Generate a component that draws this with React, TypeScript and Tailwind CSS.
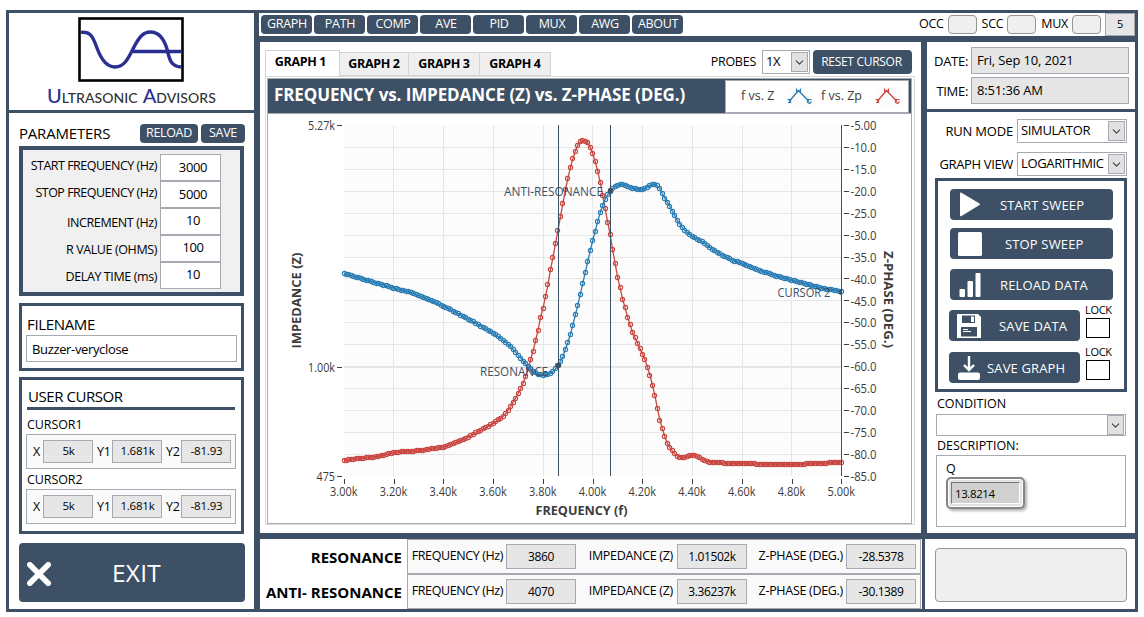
import React from 'react';
import { ChevronDown } from 'lucide-react';
import clsx from 'clsx';

type Point = [number, number];

const START_HZ = 3000;
const STOP_HZ = 5000;
const STEP_HZ = 10;

// Both traces as plotted on the canvas
const impedance: Point[] = [
  [344, 273.3], [394, 288.3], [410, 292.3], [426.7, 299], [443.3, 306], [460, 314.7], [476.7, 323.7],
  [493.3, 333.3], [503, 340], [510, 346], [516.7, 353.5], [521, 358.5], [525, 363.3], [529.4, 367.7],
  [533.6, 371.7], [537.8, 374.3], [544, 375.5], [550.4, 373.3], [554.6, 370], [558.4, 365.3],
  [563.3, 356], [565.7, 348.3], [568.3, 341.3], [570.7, 333.3], [573.3, 323.3], [575.7, 313.3],
  [578.3, 303.3], [580.7, 292.3], [583.3, 281.3], [585.7, 270.3], [588.3, 259.3], [590.7, 248.3],
  [593.3, 238.3], [595.7, 229.3], [598, 220.3], [600.3, 212.3], [602.7, 205.3], [605.3, 199],
  [607.7, 194.7], [610.7, 190.3], [615.3, 186.3], [622.3, 184], [630, 187.3], [638.3, 189.7],
  [645, 188.7], [650, 185.3], [655, 184], [659.3, 187.3], [663.3, 195.7], [667.3, 202.3],
  [671.7, 210], [678.3, 222.3], [685, 230.7], [692.3, 236.7], [703.3, 242.3], [711.7, 249],
  [723.3, 255.7], [733.3, 260.7], [742.3, 263.7], [760, 270.7], [776.7, 276], [791.7, 280.3],
  [803.3, 283.3], [820, 287.7], [841.7, 292],
];

const phase: Point[] = [
  [344, 460.3], [361, 458.3], [377.8, 456.7], [394.7, 452.3], [420, 450.7], [443.5, 447], [462, 440.3],
  [470.4, 436], [483, 429], [493.6, 423.3], [504, 415.7], [508.3, 410], [514.6, 400], [518.8, 392.3],
  [521, 387.7], [523.5, 382.3], [526, 375], [528.5, 367.7], [530.7, 359.3], [533.3, 350.3],
  [535.7, 340.3], [538.3, 329.3], [540.3, 318.3], [543.3, 307.3], [545.7, 295.3], [548.3, 283.3],
  [550.3, 270.3], [553.3, 256], [555.7, 242.3], [558.3, 228.3], [560.7, 215.3], [563.3, 201.3],
  [565.7, 188.3], [568.3, 176.3], [570.7, 166.3], [573.3, 157.3], [575.7, 150], [578.3, 144],
  [580.7, 141.3], [583.3, 140.3], [588.3, 143], [590.7, 148.3], [593.3, 155.3], [595.7, 163.3],
  [598, 172.3], [600.3, 183], [602.7, 195.3], [605.3, 209.3], [607.7, 222.3], [610.3, 235.3],
  [612.7, 250.3], [615.3, 264.3], [617.3, 276.3], [620.3, 288.3], [622.3, 298.3], [625.3, 308.3],
  [627.3, 316.3], [630.3, 325.3], [632.3, 332.3], [635.3, 338.3], [640.3, 349.3], [645.3, 360.3],
  [650.3, 376.3], [652.7, 386.3], [655.6, 398.3], [657.7, 410.3], [660.3, 421.7], [662.8, 430.3],
  [665.3, 438.3], [667.8, 444.3], [670.8, 449], [674.6, 453.7], [678.8, 457.3], [685, 457.7],
  [691.4, 455], [696.4, 456], [702, 459.3], [709.5, 462], [723, 463], [765, 464.3], [798.7, 464.3],
  [841.7, 462.3],
];

const toX = (hz: number) => 344 + ((hz - START_HZ) / (STOP_HZ - START_HZ)) * 497.5;

const sample = (trace: Point[]): Point[] => {
  const out: Point[] = [];
  for (let hz = START_HZ; hz <= STOP_HZ; hz += STEP_HZ) {
    const x = toX(hz);
    let i = 1;
    while (i < trace.length - 1 && trace[i][0] < x) i++;
    const [x0, y0] = trace[i - 1];
    const [x1, y1] = trace[i];
    out.push([x, y0 + ((x - x0) / (x1 - x0)) * (y1 - y0)]);
  }
  return out;
};

// Markers snap to whole pixels, the line between them does not
const Trace = ({ trace, color }: { trace: Point[]; color: string }) => {
  const points = sample(trace);
  return (
    <g fill="none" stroke={color}>
      <polyline points={points.map((p) => p.join(',')).join(' ')} strokeWidth="1.3" />
      {points.map(([x, y]) => (
        <circle key={x} cx={Math.floor(x) + 0.5} cy={Math.floor(y) + 0.5} r="2.1" strokeWidth="1.15" />
      ))}
    </g>
  );
};

const phaseTicks = Array.from({ length: 17 }, (_, i) => -5 - i * 5);
const freqTicks = Array.from({ length: 11 }, (_, i) => 3000 + i * 200);

const Chart = () => (
  <svg width="643" height="409" viewBox="268 114 643 409" className="block" fontSize="12" fill="#3c3c3c">
    <rect x="344" y="125" width="497" height="351" fill="#fcfcfc" />
    <g stroke="#e6e6e6" strokeWidth="1" shapeRendering="crispEdges">
      {freqTicks.slice(1, -1).map((hz) => (
        <line key={hz} x1={toX(hz)} x2={toX(hz)} y1="125" y2="476" />
      ))}
      {phaseTicks.slice(1, -1).map((deg, i) => (
        <line key={deg} x1="344" x2="841" y1={147.4 + i * 21.93} y2={147.4 + i * 21.93} />
      ))}
      <line x1="344" x2="841" y1="367.5" y2="367.5" />
    </g>

    <g stroke="#3c3c3c" shapeRendering="crispEdges">
      <line x1="337" x2="342" y1="125.5" y2="125.5" />
      <line x1="337" x2="342" y1="367.5" y2="367.5" />
      <line x1="337" x2="342" y1="476.5" y2="476.5" />
      {phaseTicks.map((deg, i) => (
        <line key={deg} x1="844" x2="849" y1={125.4 + i * 21.94} y2={125.4 + i * 21.94} />
      ))}
      {freqTicks.map((hz) => (
        <line key={hz} x1={toX(hz) + 0.4} x2={toX(hz) + 0.4} y1="479" y2="484" />
      ))}
    </g>

    <text x="308" y="130" textLength="27" lengthAdjust="spacingAndGlyphs">5.27k</text>
    <text x="308" y="372" textLength="27" lengthAdjust="spacingAndGlyphs">1.00k</text>
    <text x="316.5" y="481" textLength="18.5" lengthAdjust="spacingAndGlyphs">475</text>
    {phaseTicks.map((deg, i) => (
      <text key={deg} x="850.5" y={130 + i * 21.94} textLength="26" lengthAdjust="spacingAndGlyphs">
        {deg === -5 ? '-5.00' : deg.toFixed(1)}
      </text>
    ))}
    {freqTicks.map((hz) => (
      <text key={hz} x={toX(hz) - 14} y="496" textLength="27.5" lengthAdjust="spacingAndGlyphs">
        {(hz / 1000).toFixed(2)}k
      </text>
    ))}

    <g fontWeight="700" fontSize="12.5">
      <text x="535.5" y="515" textLength="92" lengthAdjust="spacingAndGlyphs">FREQUENCY (f)</text>
      <text transform="translate(301 348.5) rotate(-90)" textLength="96" lengthAdjust="spacingAndGlyphs">IMPEDANCE (Z)</text>
      <text transform="translate(884 251) rotate(90)" textLength="97" lengthAdjust="spacingAndGlyphs">Z-PHASE (DEG.)</text>
    </g>

    <Trace trace={phase} color="#c94843" />
    <Trace trace={impedance} color="#2b7db3" />

    <g stroke="#3d5065" shapeRendering="crispEdges">
      <line x1="558.5" x2="558.5" y1="125" y2="476" />
      <line x1="610.5" x2="610.5" y1="125" y2="476" />
      <line x1="841.5" x2="841.5" y1="125" y2="476" />
    </g>
    <g fill="#3d5065">
      <circle cx="558.5" cy="365.5" r="2.7" />
      <circle cx="610.5" cy="190.5" r="2.7" />
      <path d="M841.5 289.6a2.7 2.7 0 0 0 0 5.4z" />
      <text x="504" y="196" textLength="99" lengthAdjust="spacingAndGlyphs">ANTI-RESONANCE</text>
      <text x="480" y="376" textLength="68" lengthAdjust="spacingAndGlyphs">RESONANCE</text>
      <text x="777.5" y="297" textLength="53" lengthAdjust="spacingAndGlyphs">CURSOR 2</text>
    </g>
  </svg>
);

const LegendMark = ({ color }: { color: string }) => (
  <svg width="27" height="19" viewBox="0 0 27 19" className="shrink-0 bg-[#fcfcfc]" fill="none" stroke={color}>
    <path d="M2 14.500 11.500 3.500 22 14.500" strokeWidth="1.4" />
    <path d="M.5 12.500H3.500V15.500H1M9.500 1.500V4.500H13.500V1.500M10.500 3.500H12.500M20.500 12.500H24.500M20.500 12.500V15.500L22.500 16.500L24.500 14.500" strokeWidth="1.2" />
  </svg>
);

const Logo = () => (
  <svg width="106" height="65" viewBox="0 0 106 65" className="ml-[69px] block" fill="none">
    <rect x="1.5" y="1.5" width="103" height="62" stroke="#000" strokeWidth="2.6" />
    <g stroke="#2b2f92" strokeWidth="3.4">
      <path d="M3 15.400C12 14.400 14.500 18.500 19 31C23 42 29 50 37 50C46 50 50 42 55 32C61 20 65 15 72.500 15C81 15 86 22 89 32C91.500 43 93 49.500 103 50" />
      <path d="M55 34.500H103" />
    </g>
  </svg>
);

const Panel = ({ className, children }: { className?: string; children?: React.ReactNode }) => (
  <div className={clsx('bg-white', className)}>{children}</div>
);

const Field = ({ className, children }: { className?: string; children?: React.ReactNode }) => (
  <div className={clsx('flex shrink-0 items-center border border-[#a9a9b1] whitespace-nowrap', className)}>{children}</div>
);

const NavButton = ({ className, children }: { className?: string; children: React.ReactNode }) => (
  <button className={clsx('flex shrink-0 items-center justify-center rounded bg-[#3d5065] font-medium whitespace-nowrap text-white', className)}>
    {children}
  </button>
);

const Select = ({ className, value }: { className?: string; value?: string }) => (
  <Field className={clsx('justify-between bg-white pr-px pl-[3px]', className)}>
    <span>{value}</span>
    <span className="flex h-5 w-[17px] items-center justify-center border border-[#a9a9b1] bg-[#e1e1e1]">
      <ChevronDown size={13} strokeWidth={2} className="shrink-0 text-[#404040]" />
    </span>
  </Field>
);

const parameters = [
  { label: 'START FREQUENCY (Hz)', value: '3000' },
  { label: 'STOP FREQUENCY (Hz)', value: '5000' },
  { label: 'INCREMENT (Hz)', value: '10' },
  { label: 'R VALUE (OHMS)', value: '100' },
  { label: 'DELAY TIME (ms)', value: '10' },
];

const CursorRow = () => (
  <Field className="h-[35px] w-[210px] bg-[#fafafa] pl-1.5 text-[12.5px]">
    {[['X', '5k'], ['Y1', '1.681k'], ['Y2', '-81.93']].map(([name, value], i) => (
      <React.Fragment key={name}>
        <span className={clsx('pt-0.5 tracking-[-0.3px]', i === 0 ? 'w-2.5' : 'w-[19px] pl-1')}>{name}</span>
        <Field className="h-[23px] w-[50px] justify-center bg-[#e6e6e6] pb-px pl-px text-[11.5px] tracking-[-0.2px]">{value}</Field>
      </React.Fragment>
    ))}
  </Field>
);

const Sidebar = () => (
  <div className="flex w-[245px] flex-col gap-[3px]">
    <Panel className="h-[97px] pt-1">
      <Logo />
      <div className="mt-[3px] ml-[38px] flex items-baseline font-[Lato] text-[14px] leading-5 font-medium whitespace-nowrap text-[#333]">
        <span className="text-[20px] text-[#2b2f92]">U</span>
        <span className="tracking-[0.05px]">LTRASONIC</span>
        <span className="ml-[5px] text-[20px] text-[#2b2f92]">A</span>
        <span className="tracking-[0.05px]">DVISORS</span>
      </div>
    </Panel>

    <Panel className="h-[496px] pl-2.5">
      <div className="flex h-[33px] items-end pb-[3px]">
        <span className="w-[121px] pb-px text-[15px] leading-[18px] tracking-[-0.2px]">PARAMETERS</span>
        <NavButton className="h-[19px] w-[58px] text-[12.5px] tracking-[-0.35px]">RELOAD</NavButton>
        <NavButton className="ml-[3px] h-[19px] w-11 text-[12.5px] tracking-[-0.3px]">SAVE</NavButton>
      </div>

      <div className="h-[150px] w-[225px] border-4 border-[#3d5065] bg-[#f0f0f0] pt-1">
        {parameters.map(({ label, value }, i) => (
          <div key={label} className="flex h-[27px] text-[12.5px]">
            <span
              className={clsx(
                'flex w-[134px] items-center justify-end whitespace-nowrap',
                i < 2 ? 'pb-0.5 tracking-[-0.5px]' : 'pt-1 tracking-[-0.4px]',
              )}
            >
              {label}
            </span>
            <Field className={clsx('ml-[3px] w-[61px] justify-center bg-white pl-[5px] text-[13px] tracking-[-0.35px]', i >= 2 && 'pb-0.5')}>
              {value}
            </Field>
          </div>
        ))}
      </div>

      <div className="mt-[7px] h-[68px] w-[225px] border-[3px] border-[#3d5065] pl-1">
        <div className="mt-[7px] pl-px text-[15px] leading-[22px] tracking-[-0.35px]">FILENAME</div>
        <Field className="h-[27px] w-[211px] bg-white pt-0.5 pl-[5px] text-[13px] tracking-[-0.35px]">Buzzer-veryclose</Field>
      </div>

      <div className="mt-1.5 h-[157px] w-[225px] border-[3px] border-[#3d5065] pl-1">
        <div className="mt-[5px] pl-0.5 text-[15px] leading-[22px] tracking-[-0.45px]">USER CURSOR</div>
        <div className="ml-px h-[3px] w-[208px] bg-[#3d5065]" />
        <div className="h-6 pt-1.5 pl-px text-[12.5px] leading-[18px] tracking-[-0.1px]">CURSOR1</div>
        <CursorRow />
        <div className="h-5 pt-0.5 pl-px text-[12.5px] leading-[18px] tracking-[-0.1px]">CURSOR2</div>
        <CursorRow />
      </div>

      <button className="mt-[9px] flex h-[59px] w-[226px] items-center rounded bg-[#3d5065] pt-0.5 pl-2 text-[24.5px] text-white">
        <svg width="24" height="24" viewBox="0 0 24 24" stroke="#fff" strokeWidth="5.600" strokeLinecap="round">
          <path d="M2.800 2.800 21.200 21.200M21.200 2.800 2.800 21.200" />
        </svg>
        <span className="ml-[61px] tracking-[0.2px]">EXIT</span>
      </button>
    </Panel>
  </div>
);

const navItems = ['GRAPH', 'PATH', 'COMP', 'AVE', 'PID', 'MUX', 'AWG', 'ABOUT'];

const TopBar = () => (
  <Panel className="flex h-[23px] items-center pl-0.5 text-[12.5px]">
    <div className="flex gap-0.5">
      {navItems.map((item) => (
        <NavButton key={item} className="h-[19px] w-[51px] pl-px text-[12.5px] tracking-[-0.3px]">{item}</NavButton>
      ))}
    </div>
    <div className="ml-auto flex items-center tracking-[-0.3px]">
      {['OCC', 'SCC', 'MUX'].map((name) => (
        <React.Fragment key={name}>
          <span className="mr-1">{name}</span>
          <span className="mr-[5px] h-[19px] w-[29px] rounded border border-[#959595] bg-[#efefef]" />
        </React.Fragment>
      ))}
      <Field className="-ml-px h-[23px] w-[30px] justify-center bg-[#e6e6e6] text-[11px]">5</Field>
    </div>
  </Panel>
);

const GraphPanel = () => (
  <Panel className="h-[491px] w-[661px] pt-2 pl-[5px]">
    <div className="flex h-[26px] text-[12.5px] font-bold tracking-[-0.35px]">
      <div className="flex w-[75px] items-center justify-center border border-b-0 border-[#d4d4d4] pr-1 pb-[3px]">GRAPH 1</div>
      {[['GRAPH 2', 'w-[69px]'], ['GRAPH 3', 'w-[71px]'], ['GRAPH 4', 'w-[71px]']].map(([tab, width]) => (
        <div key={tab} className={clsx('mt-0.5 flex items-center justify-center border border-l-0 border-[#d4d4d4] bg-[#efefef]', width)}>
          {tab}
        </div>
      ))}
      <div className="ml-auto flex h-6 items-center pr-[9px] font-normal">
        <span className="mr-1.5 tracking-[-0.25px]">PROBES</span>
        <Select value="1X" className="h-6 w-12 pl-1.5 text-[13px]" />
        <NavButton className="ml-[3px] h-6 w-[99px] pr-0.5 text-[12px] tracking-[-0.3px]">RESET CURSOR</NavButton>
      </div>
    </div>

    <div className="h-[449px] w-[650px] border border-[#d9d9d9] p-px">
      <div className="h-[446px] w-[645px] border border-[#a9a9b1]">
        <div className="flex h-[35px] items-center justify-between border-b border-[#a9a9b1] bg-[#3d5065] pr-0.5 pl-1.5">
          <span className="pb-0.5 text-[17px] font-bold tracking-[-0.1px] whitespace-nowrap text-white">
            FREQUENCY vs. IMPEDANCE (Z) vs. Z-PHASE (DEG.)
          </span>
          <Field className="h-[33px] w-[184px] bg-white pl-[15px] text-[12.5px] text-[#3c3c3c]">
            <span className="w-[46px]">f vs. Z</span>
            <LegendMark color="#2b7db3" />
            <span className="mx-[7px] w-[47px]">f vs. Zp</span>
            <LegendMark color="#c94843" />
          </Field>
        </div>
        <Chart />
      </div>
    </div>
  </Panel>
);

const PlayIcon = () => (
  <svg width="24" height="25" viewBox="0 0 24 25" fill="#fff"><path d="M2 1.500Q2 0 3.500.8L21.500 11.500Q22.500 12.300 21.500 13L3.500 24Q2 24.800 2 23.500Z" /></svg>
);
const StopIcon = () => (
  <svg width="24" height="24" viewBox="0 0 24 24"><rect width="24" height="24" rx="1.500" fill="#fff" /></svg>
);
const BarsIcon = () => (
  <svg width="24" height="24" viewBox="0 0 24 24" fill="#fff">
    <rect x="1.500" y="16" width="5.500" height="8" rx="1" />
    <rect x="9.500" y="8" width="5.500" height="16" rx="1" />
    <rect x="17.500" y="0" width="5" height="24" rx="1" />
  </svg>
);
const FloppyIcon = () => (
  <svg width="24" height="24" viewBox="0 0 24 24">
    <path d="M0 0H21L24 3V24H0Z" fill="#fff" />
    <path d="M5 1.500H18V9H5ZM4 13H20V22.500H4Z" fill="#3d5065" />
    <rect x="14" y="2.500" width="3" height="5.500" fill="#fff" />
    <path d="M6 15.500H11M6 17.500H14" stroke="#fff" strokeWidth="1" />
  </svg>
);
const DownloadIcon = () => (
  <svg width="24" height="24" viewBox="0 0 24 24">
    <path d="M12 0V13M7 9 12 14 17 9" fill="none" stroke="#fff" strokeWidth="2.400" />
    <rect x="1" y="16.500" width="22" height="7.500" rx="2" fill="#fff" />
  </svg>
);

const ActionButton = ({ icon, label, className, text }: { icon: React.ReactNode; label: string; className: string; text: string }) => (
  <button className={clsx('flex h-[31px] items-center rounded bg-[#3d5065] pl-2 text-[13px] font-medium whitespace-nowrap text-white', className)}>
    {icon}
    <span className={clsx('pt-0.5 tracking-[0.15px]', text)}>{label}</span>
  </button>
);

const Lock = ({ className }: { className: string }) => (
  <div className={clsx('w-7 text-[11px] leading-3', className)}>
    <div className="-ml-px pt-px tracking-[-0.3px]">LOCK</div>
    <div className="mt-0.5 h-5 w-6 border border-black bg-white" />
  </div>
);

const ControlPanel = () => (
  <div className="ml-1.5 flex w-[208px] flex-col gap-[3px] text-[13px]">
    <Panel className="flex h-[67px] flex-col gap-[3px] pt-[5px]">
      {[['DATE:', 'Fri, Sep 10, 2021'], ['TIME:', '8:51:36 AM']].map(([name, value]) => (
        <div key={name} className="flex h-[27px] items-center">
          <span className="w-[41px] pt-[3px] text-right tracking-[-0.3px]">{name}</span>
          <Field className="ml-[3px] h-[27px] w-[158px] bg-[#e6e6e6] pt-px pl-[5px] tracking-[-0.15px]">{value}</Field>
        </div>
      ))}
    </Panel>

    <Panel className="h-[421px] pt-[7px] pl-2">
      {[['RUN MODE', 'SIMULATOR', 'tracking-[-0.2px]'], ['GRAPH VIEW', 'LOGARITHMIC', 'mt-[9px] tracking-[-0.35px]']].map(([name, value, cls]) => (
        <div key={name} className={clsx('flex h-6 items-center', cls)}>
          <span className="w-[78px] pt-0.5 text-right whitespace-nowrap">{name}</span>
          <Select value={value} className="ml-1 h-6 w-[110px] tracking-[-0.35px]" />
        </div>
      ))}

      <div className="mt-0.5 h-[214px] w-[192px] border-[3px] border-[#3d5065] pt-2 pl-3">
        <ActionButton icon={<PlayIcon />} label="START SWEEP" className="w-[163px]" text="ml-[18px]" />
        <ActionButton icon={<StopIcon />} label="STOP SWEEP" className="mt-2 w-[163px]" text="ml-[23px]" />
        <ActionButton icon={<BarsIcon />} label="RELOAD DATA" className="mt-2.5 w-[163px]" text="ml-[18px]" />
        <div className="-ml-px flex">
          <ActionButton icon={<FloppyIcon />} label="SAVE DATA" className="mt-2.5 w-[131px]" text="ml-[18px]" />
          <Lock className="mt-[3px] ml-1.5" />
        </div>
        <div className="-ml-px flex">
          <ActionButton icon={<DownloadIcon />} label="SAVE GRAPH" className="mt-[11px] w-[131px]" text="ml-[6px]" />
          <Lock className="mt-1 ml-1.5" />
        </div>
      </div>

      <div className="h-[22px] pl-0.5 text-[12.5px] leading-[24px]">CONDITION</div>
      <Select className="ml-px h-[22px] w-[190px]" />
      <div className="h-[19px] pl-0.5 text-[12.5px] leading-[20px] tracking-[-0.05px]">DESCRIPTION:</div>
      <div className="ml-px h-[72px] w-[190px] border border-[#a9a9b1] pt-1 pl-[9px]">
        <div className="text-[12.5px] leading-[17px]">Q</div>
        <div className="flex h-8 w-[79px] rounded-[5px] border-2 border-[#858585] bg-[#e2e2e2] p-[3px] shadow-[2px_2px_3px_rgba(0,0,0,0.3),inset_0_0_0_1px_#fff]">
          <div className="flex w-full items-center border border-t-[#777] border-r-white border-b-white border-l-[#777] bg-[#d0d0d0] pt-px pl-[3px] text-[11.5px] tracking-[-0.4px]">
            13.8214
          </div>
        </div>
      </div>
    </Panel>
  </div>
);

const results = [
  { name: 'RESONANCE', frequency: '3860', impedance: '1.01502k', phase: '-28.5378' },
  { name: 'ANTI- RESONANCE', frequency: '4070', impedance: '3.36237k', phase: '-30.1389' },
];

const Results = () => (
  <Panel className="h-[70px] w-[662px]">
    {results.map((row) => (
      <div key={row.name} className="flex h-[35px] text-[12.5px] tracking-[-0.4px] whitespace-nowrap">
        <div className="flex w-[142px] items-center justify-end pt-0.5 text-[15px] font-bold tracking-[0px]">{row.name}</div>
        <Field className="ml-[5px] h-[35px] w-[514px] bg-[#fafafa]">
          <span className="w-[95px] text-right">FREQUENCY (Hz)</span>
          <Field className="ml-[3px] h-[25px] w-[70px] justify-center bg-[#e6e6e6] text-[12px]">{row.frequency}</Field>
          <span className="w-[97px] text-right tracking-[-0.3px]">IMPEDANCE (Z)</span>
          <Field className="ml-1 h-[25px] w-[70px] justify-center bg-[#e6e6e6] text-[12px]">{row.impedance}</Field>
          <span className="w-24 text-right tracking-[-0.3px]">Z-PHASE (DEG.)</span>
          <Field className="ml-[3px] h-[25px] w-[70px] justify-center bg-[#e6e6e6] text-[12px]">{row.phase}</Field>
        </Field>
      </div>
    ))}
  </Panel>
);

const App = () => {
  return (
    <div className="h-[617px] w-[1144px] overflow-hidden bg-white pt-2.5 pl-1.5 font-['Open_Sans',sans-serif] text-black">
      <div className="flex h-[602px] w-[1132px] gap-[5px] bg-[#3d5065] p-[3px]">
        <Sidebar />
        <div className="w-[876px]">
          <TopBar />
          <div className="mt-1.5 ml-px flex">
            <GraphPanel />
            <ControlPanel />
          </div>
          <div className="mt-1.5 ml-px flex gap-[3px]">
            <Results />
            <Panel className="h-[70px] w-[210px] pt-[9px] pl-2.5">
              <div className="h-[54px] w-[192px] rounded border border-[#959595] bg-[#efefef]" />
            </Panel>
          </div>
        </div>
      </div>
    </div>
  );
};

export default App;
